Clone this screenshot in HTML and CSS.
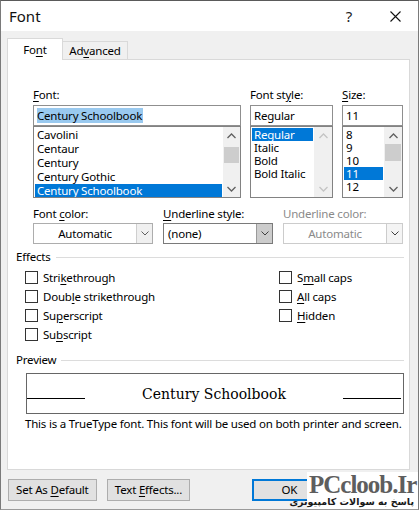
FILE: index.html
```html
<!DOCTYPE html>
<html>
<head>
<meta charset="utf-8">
<title>Font</title>
<link rel="stylesheet" href="styles.css">
</head>
<body>
<div class="window">
  <div class="titlebar">
    <span class="title">Font</span>
    <span class="cap-btn help">?</span>
    <span class="cap-btn close"><svg width="11" height="11" viewBox="0 0 11 11"><path d="M0.5 0.5 L10.5 10.5 M10.5 0.5 L0.5 10.5" stroke="#111" stroke-width="1.1" fill="none"/></svg></span>
  </div>
  <div class="client">
    <div class="tabs">
      <div class="tab active">Fo<u>n</u>t</div>
      <div class="tab">Ad<u>v</u>anced</div>
    </div>
    <div class="panel">
      <div class="top-grid">
        <div class="col">
          <div class="lbl"><u>F</u>ont:</div>
          <div class="field"><span class="hl">Century Schoolbook</span></div>
          <div class="list">
            <div class="items font-items">
              <div class="item">Cavolini</div>
              <div class="item">Centaur</div>
              <div class="item">Century</div>
              <div class="item">Century Gothic</div>
              <div class="item selected">Century Schoolbook</div>
            </div>
            <div class="vscroll">
              <div class="arrow"><svg width="9" height="6" viewBox="0 0 9 6"><path d="M0.5 5 L4.5 1 L8.5 5" stroke="#606060" stroke-width="1.3" fill="none"/></svg></div>
              <div class="track"><div class="thumb font-thumb"></div></div>
              <div class="arrow"><svg width="9" height="6" viewBox="0 0 9 6"><path d="M0.5 1 L4.5 5 L8.5 1" stroke="#606060" stroke-width="1.3" fill="none"/></svg></div>
            </div>
          </div>
        </div>
        <div class="col">
          <div class="lbl">Font st<u>y</u>le:</div>
          <div class="field">Regular</div>
          <div class="list">
            <div class="items small-items">
              <div class="item selected">Regular</div>
              <div class="item">Italic</div>
              <div class="item">Bold</div>
              <div class="item">Bold Italic</div>
            </div>
            <div class="vscroll wide">
              <div class="arrow"><svg width="9" height="6" viewBox="0 0 9 6"><path d="M0.5 5 L4.5 1 L8.5 5" stroke="#c4c4c4" stroke-width="1.3" fill="none"/></svg></div>
              <div class="track"></div>
              <div class="arrow"><svg width="9" height="6" viewBox="0 0 9 6"><path d="M0.5 1 L4.5 5 L8.5 1" stroke="#c4c4c4" stroke-width="1.3" fill="none"/></svg></div>
            </div>
          </div>
        </div>
        <div class="col">
          <div class="lbl"><u>S</u>ize:</div>
          <div class="field">11</div>
          <div class="list">
            <div class="items small-items">
              <div class="item">8</div>
              <div class="item">9</div>
              <div class="item">10</div>
              <div class="item selected">11</div>
              <div class="item">12</div>
            </div>
            <div class="vscroll wide">
              <div class="arrow"><svg width="9" height="6" viewBox="0 0 9 6"><path d="M0.5 5 L4.5 1 L8.5 5" stroke="#606060" stroke-width="1.3" fill="none"/></svg></div>
              <div class="track"><div class="thumb size-thumb"></div></div>
              <div class="arrow"><svg width="9" height="6" viewBox="0 0 9 6"><path d="M0.5 1 L4.5 5 L8.5 1" stroke="#606060" stroke-width="1.3" fill="none"/></svg></div>
            </div>
          </div>
        </div>
      </div>

      <div class="combo-grid">
        <div class="col">
          <div class="lbl">Font <u>c</u>olor:</div>
          <div class="combo">
            <span class="combo-text center">Automatic</span>
            <span class="combo-btn"><svg width="8" height="5" viewBox="0 0 8 5"><path d="M0.5 0.5 L4 4 L7.5 0.5" stroke="#606060" stroke-width="1" fill="none"/></svg></span>
          </div>
        </div>
        <div class="col">
          <div class="lbl"><u>U</u>nderline style:</div>
          <div class="combo focused">
            <span class="combo-text">(none)</span>
            <span class="combo-btn"><svg width="8" height="5" viewBox="0 0 8 5"><path d="M0.5 0.5 L4 4 L7.5 0.5" stroke="#404040" stroke-width="1" fill="none"/></svg></span>
          </div>
        </div>
        <div class="col">
          <div class="lbl disabled">Underline color:</div>
          <div class="combo disabled">
            <span class="combo-text center">Automatic</span>
            <span class="combo-btn"><svg width="8" height="5" viewBox="0 0 8 5"><path d="M0.5 0.5 L4 4 L7.5 0.5" stroke="#404040" stroke-width="1" fill="none"/></svg></span>
          </div>
        </div>
      </div>

      <div class="group-head effects-head"><span>Effects</span><span class="rule"></span></div>
      <div class="checks">
        <div class="check"><span class="box"></span>Stri<u>k</u>ethrough</div>
        <div class="check"><span class="box"></span>S<u>m</u>all caps</div>
        <div class="check"><span class="box"></span>Doub<u>l</u>e strikethrough</div>
        <div class="check"><span class="box"></span><u>A</u>ll caps</div>
        <div class="check"><span class="box"></span>Su<u>p</u>erscript</div>
        <div class="check"><span class="box"></span><u>H</u>idden</div>
        <div class="check"><span class="box"></span>Su<u>b</u>script</div>
      </div>

      <div class="group-head preview-head"><span>Preview</span><span class="rule"></span></div>
      <div class="preview">
        <span class="pline"></span>
        <span class="ptext">Century Schoolbook</span>
        <span class="pline"></span>
      </div>
      <div class="info">This is a TrueType font. This font will be used on both printer and screen.</div>
    </div>

    <div class="buttons">
      <div class="btn w90">Set As <u>D</u>efault</div>
      <div class="btn w85">Text <u>E</u>ffects...</div>
      <div class="btn default ok">OK</div>
      <div class="btn cancel">Cancel</div>
    </div>
  </div>

  <div class="watermark">
    <div class="wm-brand">PCcloob.Ir</div>
    <div class="wm-sub" dir="rtl">پاسخ به سوالات کامپیوتری</div>
  </div>
</div>
</body>
</html>
```
FILE: styles.css
```css
* { box-sizing: border-box; }
html, body { margin: 0; padding: 0; background: #ffffff; }
body {
  font-family: "Noto Sans", "Open Sans", sans-serif;
  font-size: 11.5px;
  letter-spacing: -0.2px;
  line-height: 16px;
  color: #000;
}
u { text-decoration: underline; text-underline-offset: 2px; }

.window {
  position: relative;
  width: 419px;
  height: 510px;
  border-left: 1px solid #7a7a7a;
  border-right: 1px solid #7a7a7a;
  border-top: 1px solid #5a5a5a;
  border-bottom: 1px solid #9a9a9a;
  background: #f0f0f0;
  display: flex;
  flex-direction: column;
  overflow: hidden;
}

.titlebar {
  height: 30px;
  background: #fff;
  display: flex;
  align-items: center;
}
.title {
  font-size: 15px;
  letter-spacing: 0;
  padding-left: 8px;
  flex: 1;
  color: #111;
}
.cap-btn {
  width: 46px;
  height: 30px;
  display: flex;
  align-items: center;
  justify-content: center;
  font-size: 15px;
  color: #222;
}

.client {
  flex: 1;
  padding: 7px 8px 0 6px;
  display: flex;
  flex-direction: column;
}

.tabs {
  height: 21px;
  display: flex;
  align-items: flex-start;
}
.tab {
  border: 1px solid #d9d9d9;
  border-bottom: none;
  background: #f0f0f0;
  margin-top: 3px;
  height: 18px;
  width: 66px;
  margin-left: -1px;
  text-align: center;
  line-height: 18px;
}
.tab.active {
  margin-left: 0;
  margin-top: 0;
  width: 56px;
  height: 22px;
  background: #fff;
  position: relative;
  z-index: 1;
  line-height: 21px;
}

.panel {
  height: 411px;
  border: 1px solid #d9d9d9;
  background: #fff;
}

.top-grid {
  margin: 27px 0 0 25px;
  display: grid;
  grid-template-columns: 208px 83px 61px;
  column-gap: 9px;
}
.lbl { height: 16px; margin-bottom: 2px; white-space: nowrap; }
.lbl.disabled { color: #8a8a8a; }

.field {
  height: 21px;
  border: 1px solid #8f8f8f;
  padding: 1px 0 0 3px;
  line-height: 17px;
  white-space: nowrap;
}
.hl { background: #99c9ef; padding: 0 1px 0 0; }

.list {
  height: 72px;
  border: 1px solid #828282;
  display: flex;
}
.items {
  flex: 1;
  padding: 1px 1px 0 1px;
  overflow: hidden;
  white-space: nowrap;
}
.font-items .item { height: 14px; line-height: 14px; }
.small-items .item { height: 13px; line-height: 13px; }
.item { padding-left: 2px; }
.item.selected { background: #0078d7; color: #fff; }

.vscroll {
  width: 17px;
  background: #f0f0f0;
  display: flex;
  flex-direction: column;
}
.vscroll.wide { width: 18px; }
.arrow {
  height: 17px;
  display: flex;
  align-items: center;
  justify-content: center;
}
.track { flex: 1; position: relative; }
.thumb { background: #cdcdcd; margin: 0 1px; }
.font-thumb { margin-top: 3px; height: 16px; }
.size-thumb { margin-top: 0; height: 17px; }

.combo-grid {
  margin: 8px 0 0 25px;
  display: grid;
  grid-template-columns: 120px 110px 120px;
  column-gap: 10px;
}
.combo-grid .lbl { margin-bottom: 1px; }
.combo {
  height: 21px;
  border: 1px solid #adadad;
  display: flex;
  background: #fff;
}
.combo.focused { border-color: #7a7a7a; }
.combo.disabled { border-color: #cccccc; color: #8a8a8a; }
.combo-text {
  flex: 1;
  line-height: 19px;
  padding-left: 4px;
  white-space: nowrap;
}
.combo-text.center { text-align: center; padding-left: 0; }
.combo-btn {
  width: 16px;
  border-left: 1px solid #cfcfcf;
  background: #f0f0f0;
  display: flex;
  align-items: center;
  justify-content: center;
}
.combo.focused .combo-btn { background: #cccccc; border-left-color: #9a9a9a; }
.combo.disabled .combo-btn { background: #f4f4f4; border-left-color: #cccccc; }

.group-head {
  display: flex;
  align-items: center;
  height: 16px;
  margin-left: 8px;
  margin-right: 5px;
}
.group-head .rule {
  flex: 1;
  height: 1px;
  background: #dcdcdc;
  margin-left: 5px;
}
.effects-head { margin-top: 5px; }
.preview-head { margin-top: 8px; }

.checks {
  margin: 3px 0 0 17px;
  display: grid;
  grid-template-columns: 254px auto;
  grid-auto-rows: 19px;
}
.check {
  display: flex;
  align-items: center;
  white-space: nowrap;
}
.box {
  width: 13px;
  height: 13px;
  border: 1px solid #333;
  background: #fff;
  margin-right: 5px;
}

.preview {
  margin: 5px 0 0 18px;
  width: 378px;
  height: 41px;
  border: 1px solid #666;
  display: grid;
  grid-template-columns: 58px 1fr 58px;
  align-items: center;
  padding: 0 2px 0 0;
}
.pline {
  height: 1px;
  background: #000;
  margin-top: 10px;
}
.ptext {
  text-align: center;
  font-family: "DejaVu Serif", "Liberation Serif", serif;
  font-size: 14px;
  letter-spacing: 0;
  line-height: 20px;
  margin-top: 1px;
}
.info {
  margin: 2px 0 0 17px;
  white-space: nowrap;
}

.buttons {
  margin-top: 9px;
  display: flex;
  align-items: flex-start;
}
.btn {
  height: 22px;
  border: 1px solid #adadad;
  background: #e1e1e1;
  text-align: center;
  line-height: 20px;
  white-space: nowrap;
}
.w90 { width: 90px; margin-left: 1px; }
.w85 { width: 85px; margin-left: 10px; }
.ok { width: 75px; margin-left: 62px; }
.btn.default { border: 2px solid #0078d7; line-height: 18px; }
.cancel { width: 75px; margin-left: 10px; }

.watermark {
  position: absolute;
  right: -1px;
  bottom: -1px;
  width: 112px;
  height: 38px;
  background: #fff;
  padding: 2px 0 0 2px;
  letter-spacing: 0;
}
.wm-brand {
  font-family: "Liberation Serif", "DejaVu Serif", serif;
  font-weight: bold;
  font-size: 25px;
  letter-spacing: -1px;
  line-height: 22px;
  color: #5e5e5e;
}
.wm-sub {
  font-family: "DejaVu Sans", sans-serif;
  font-weight: bold;
  font-size: 9.5px;
  line-height: 12px;
  color: #1a1a1a;
  text-align: right;
  padding-right: 5px;
  white-space: nowrap;
}
```
